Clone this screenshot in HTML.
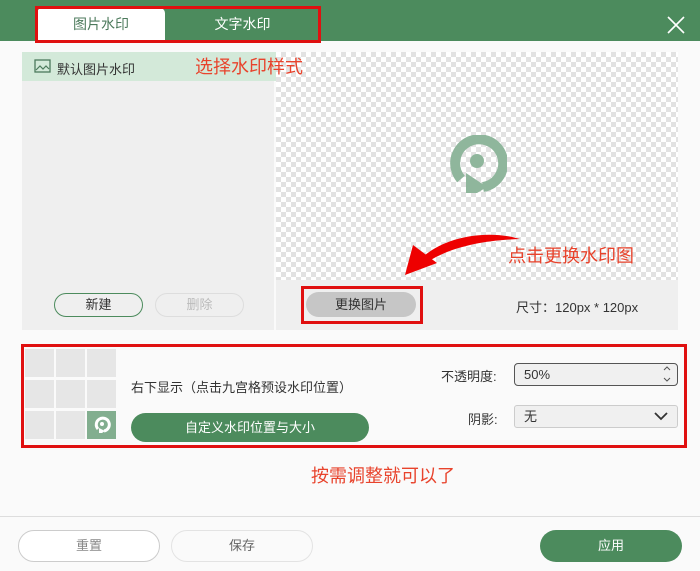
<!DOCTYPE html><html><head><meta charset="utf-8"><style>
*{margin:0;padding:0;box-sizing:border-box}
body{width:700px;height:571px;background:#fafafa;position:relative;overflow:hidden;font-family:"Liberation Sans","Noto Sans CJK SC",sans-serif;font-size:13px;color:#333}
.a{position:absolute}
.red{color:#e8432c;font-size:18px;z-index:5}
.chk{background-color:#fff;background-image:linear-gradient(45deg,#e2e2e2 25%,transparent 25%,transparent 75%,#e2e2e2 75%),linear-gradient(45deg,#e2e2e2 25%,transparent 25%,transparent 75%,#e2e2e2 75%);background-size:10px 10px;background-position:0 0,5px 5px}
.btn{position:absolute;border-radius:16px;text-align:center}
.cell{position:absolute;width:29px;height:28px;background:#e6e6e6}
</style></head><body>
<div class="a" style="left:0;top:0;width:700px;height:41px;background:#4c8b5d"></div>
<div class="a" style="left:37px;top:8px;width:128px;height:33px;background:#fff;border-radius:5px 5px 0 0;text-align:center;line-height:32px;color:#4c7a5c;font-size:14px">图片水印</div>
<div class="a" style="left:165px;top:8px;width:155px;height:33px;text-align:center;line-height:32px;color:#fff;font-size:14px">文字水印</div>
<div class="a" style="left:35px;top:6px;width:286px;height:37px;border:3px solid #e01010"></div>
<svg class="a" style="left:667px;top:16px" width="18" height="18"><path d="M1 1L17 17M17 1L1 17" stroke="#fff" stroke-width="1.6"/></svg>

<div class="a" style="left:22px;top:52px;width:252px;height:278px;background:#efefef"></div>
<div class="a chk" style="left:276px;top:52px;width:402px;height:228px"></div>
<div class="a" style="left:22px;top:52px;width:254px;height:29px;background:#d3e9d9"></div>
<svg class="a" style="left:34px;top:59px" width="17" height="14"><rect x="1" y="1" width="15" height="12" fill="none" stroke="#4c7a5c" stroke-width="1.3"/><path d="M2 11L6 7L9 10L12 7L15 10" fill="none" stroke="#4c7a5c" stroke-width="1.2"/></svg>
<div class="a" style="left:57px;top:59px;font-size:13px">默认图片水印</div>
<div class="a red" style="left:195px;top:53px">选择水印样式</div>

<div class="a" style="left:276px;top:280px;width:402px;height:50px;background:#efefef"></div>
<svg class="a" style="left:447px;top:135px" width="60" height="62"><path d="M14 44A24 24 0 1 1 36 52" fill="none" stroke="#8fb69c" stroke-width="10"/><circle cx="30" cy="26" r="7" fill="#8fb69c"/><path d="M19 38L19 58L30 58L40 52L28 44Z" fill="#8fb69c"/></svg>
<svg class="a" style="left:395px;top:225px" width="130" height="55"><path d="M125 14C95 5 55 10 30 30L34 36C60 20 95 15 125 14Z" fill="#e00"/><path d="M10 50L18 20L42 38Z" fill="#e00"/></svg>
<div class="a red" style="left:508px;top:242px">点击更换水印图</div>
<div class="btn" style="left:306px;top:292px;width:110px;height:25px;background:#c6c6c6;line-height:25px">更换图片</div>
<div class="a" style="left:301px;top:286px;width:122px;height:38px;border:3px solid #e01010"></div>
<div class="a" style="left:516px;top:297px">尺寸：120px * 120px</div>
<div class="btn" style="left:54px;top:293px;width:89px;height:24px;border:1px solid #4c8b5d;line-height:22px">新建</div>
<div class="btn" style="left:155px;top:293px;width:89px;height:24px;border:1px solid #ddd;line-height:22px;color:#bbb">删除</div>

<div class="a" style="left:21px;top:344px;width:666px;height:104px;border:3px solid #e01010"></div>
<div class="cell" style="left:25px;top:349px"></div><div class="cell" style="left:56px;top:349px"></div><div class="cell" style="left:87px;top:349px"></div>
<div class="cell" style="left:25px;top:380px"></div><div class="cell" style="left:56px;top:380px"></div><div class="cell" style="left:87px;top:380px"></div>
<div class="cell" style="left:25px;top:411px"></div><div class="cell" style="left:56px;top:411px"></div><div class="cell" style="left:87px;top:411px;background:#82ae8f"></div>
<svg class="a" style="left:92px;top:415px" width="20" height="20"><path d="M6 14A6.5 6.5 0 1 1 12 16" fill="none" stroke="#fff" stroke-width="3"/><circle cx="10" cy="9" r="2" fill="#fff"/><path d="M7 13L7 18L10 18L13 16Z" fill="#fff"/></svg>
<div class="a" style="left:131px;top:377px">右下显示（点击九宫格预设水印位置）</div>
<div class="btn" style="left:131px;top:413px;width:238px;height:29px;background:#4c8b5d;color:#fff;line-height:29px">自定义水印位置与大小</div>
<div class="a" style="left:441px;top:366px">不透明度:</div>
<div class="a" style="left:514px;top:363px;width:164px;height:23px;border:1px solid #555;border-radius:4px;background:#f0f0f0;padding-left:9px;line-height:21px">50%</div>
<svg class="a" style="left:662px;top:364px" width="10" height="20"><path d="M2 6L5 3L8 6M2 14L5 17L8 14" fill="none" stroke="#555" stroke-width="1"/></svg>
<div class="a" style="left:468px;top:409px">阴影:</div>
<div class="a" style="left:514px;top:405px;width:164px;height:23px;border:1px solid #ccc;border-radius:3px;background:#f0f0f0;padding-left:9px;line-height:21px">无</div>
<svg class="a" style="left:654px;top:411px" width="14" height="10"><path d="M1 2L7 8L13 2" fill="none" stroke="#333" stroke-width="1.8"/></svg>
<div class="a red" style="left:311px;top:462px">按需调整就可以了</div>

<div class="a" style="left:0;top:516px;width:700px;height:1px;background:#ddd"></div>
<div class="btn" style="left:18px;top:530px;width:142px;height:32px;border:1px solid #ccc;background:#fff;line-height:30px;color:#888">重置</div>
<div class="btn" style="left:171px;top:530px;width:142px;height:32px;border:1px solid #e3e3e3;line-height:30px;color:#666">保存</div>
<div class="btn" style="left:540px;top:530px;width:142px;height:32px;background:#4c8b5d;line-height:32px;color:#fff">应用</div>
</body></html>
